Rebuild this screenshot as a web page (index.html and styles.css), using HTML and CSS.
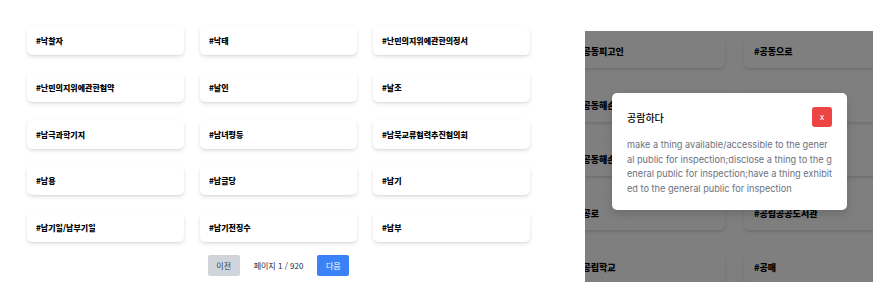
FILE: index.html
```html
<!DOCTYPE html>
<html lang="ko">
<head>
<meta charset="utf-8">
<title>단어 목록</title>
<link rel="stylesheet" href="styles.css">
</head>
<body>
<div class="app">
  <section class="list">
    <div class="grid">
      <div class="card">#낙찰자</div>
      <div class="card">#낙태</div>
      <div class="card">#난민의지위에관한의정서</div>
      <div class="card">#난민의지위에관한협약</div>
      <div class="card">#날인</div>
      <div class="card">#날조</div>
      <div class="card">#남극과학기지</div>
      <div class="card">#남녀평등</div>
      <div class="card">#남북교류협력추진협의회</div>
      <div class="card">#남용</div>
      <div class="card">#납골당</div>
      <div class="card">#납기</div>
      <div class="card">#납기일/납부기일</div>
      <div class="card">#납기전징수</div>
      <div class="card">#납부</div>
    </div>
    <nav class="pager">
      <button class="btn btn-prev">이전</button>
      <span class="page-info">페이지 1 / 920</span>
      <button class="btn btn-next">다음</button>
    </nav>
  </section>

  <section class="shot">
    <div class="shot-grid">
      <div class="card card-lg">#공동피고인</div>
      <div class="card card-lg">#공동으로</div>
      <div class="card card-lg">#공동해손</div>
      <div class="card card-lg">#공동해손분담</div>
      <div class="card card-lg">#공동해손비용</div>
      <div class="card card-lg">#공동행위</div>
      <div class="card card-lg">#공로</div>
      <div class="card card-lg">#공립공공도서관</div>
      <div class="card card-lg">#공립학교</div>
      <div class="card card-lg">#공매</div>
    </div>
    <div class="overlay"></div>
    <div class="modal">
      <div class="modal-head">
        <h2 class="modal-title">공람하다</h2>
        <button class="close">x</button>
      </div>
      <p class="modal-body">make a thing available/accessible to the general public for inspection;disclose a thing to the general public for inspection;have a thing exhibited to the general public for inspection</p>
    </div>
  </section>
</div>
</body>
</html>
```

FILE: styles.css
```css
* { box-sizing: border-box; }

body {
  margin: 0;
  background: #ffffff;
  font-family: "Noto Sans CJK KR", "Noto Sans", sans-serif;
  color: #111827;
}

.app {
  display: flex;
  align-items: flex-start;
}

.list {
  padding: 26px 0 0 27px;
}

.grid {
  display: grid;
  grid-template-columns: repeat(3, 157px);
  column-gap: 16px;
  row-gap: 17.75px;
}

.card {
  height: 29px;
  display: flex;
  align-items: center;
  padding-left: 9px;
  background: #ffffff;
  border-radius: 5px;
  box-shadow: 0 2px 4px rgba(0, 0, 0, 0.1), 0 1px 2px rgba(0, 0, 0, 0.06);
  font-size: 8px;
  font-weight: 800;
  color: #000000;
  white-space: nowrap;
}

.pager {
  margin-top: 13px;
  display: flex;
  justify-content: center;
  align-items: center;
  gap: 14px;
}

.btn {
  height: 21px;
  width: 32px;
  padding: 0;
  border: none;
  border-radius: 2px;
  font-family: "Noto Sans CJK KR", sans-serif;
  font-size: 8px;
}

.btn-prev {
  background: #d1d5db;
  color: #374151;
}

.btn-next {
  background: #3b82f6;
  color: #ffffff;
}

.page-info {
  font-size: 8px;
  color: #1f2937;
}

.shot {
  position: relative;
  margin: 31px 0 0 55px;
  width: 288px;
  height: 251px;
  overflow: hidden;
  background: #ffffff;
}

.shot-grid {
  display: grid;
  grid-template-columns: repeat(2, 158px);
  column-gap: 19px;
  row-gap: 21px;
  margin-left: -18px;
  padding-top: 4px;
}

.card-lg {
  height: 33px;
  padding-left: 10px;
  font-size: 9px;
}

.overlay {
  position: absolute;
  inset: 0;
  background: rgba(0, 0, 0, 0.5);
}

.modal {
  position: absolute;
  left: 27px;
  top: 62px;
  width: 235px;
  height: 117px;
  padding: 14px 15px 15px;
  background: #ffffff;
  border-radius: 5px;
  box-shadow: 0 4px 10px rgba(0, 0, 0, 0.15);
}

.modal-head {
  display: flex;
  justify-content: space-between;
  align-items: center;
  height: 20px;
}

.modal-title {
  margin: 0;
  font-size: 10px;
  font-weight: 500;
  color: #000000;
}

.close {
  width: 20px;
  height: 20px;
  padding: 0;
  border: none;
  border-radius: 3px;
  background: #ef4444;
  color: #ffffff;
  font-family: "Inter", sans-serif;
  font-size: 8.5px;
}

.modal-body {
  margin: 11px -0.7px 0 0;
  font-family: "Inter", "Noto Sans", sans-serif;
  font-size: 9.2px;
  line-height: 14.5px;
  color: #6b7280;
  word-break: break-all;
}
```
